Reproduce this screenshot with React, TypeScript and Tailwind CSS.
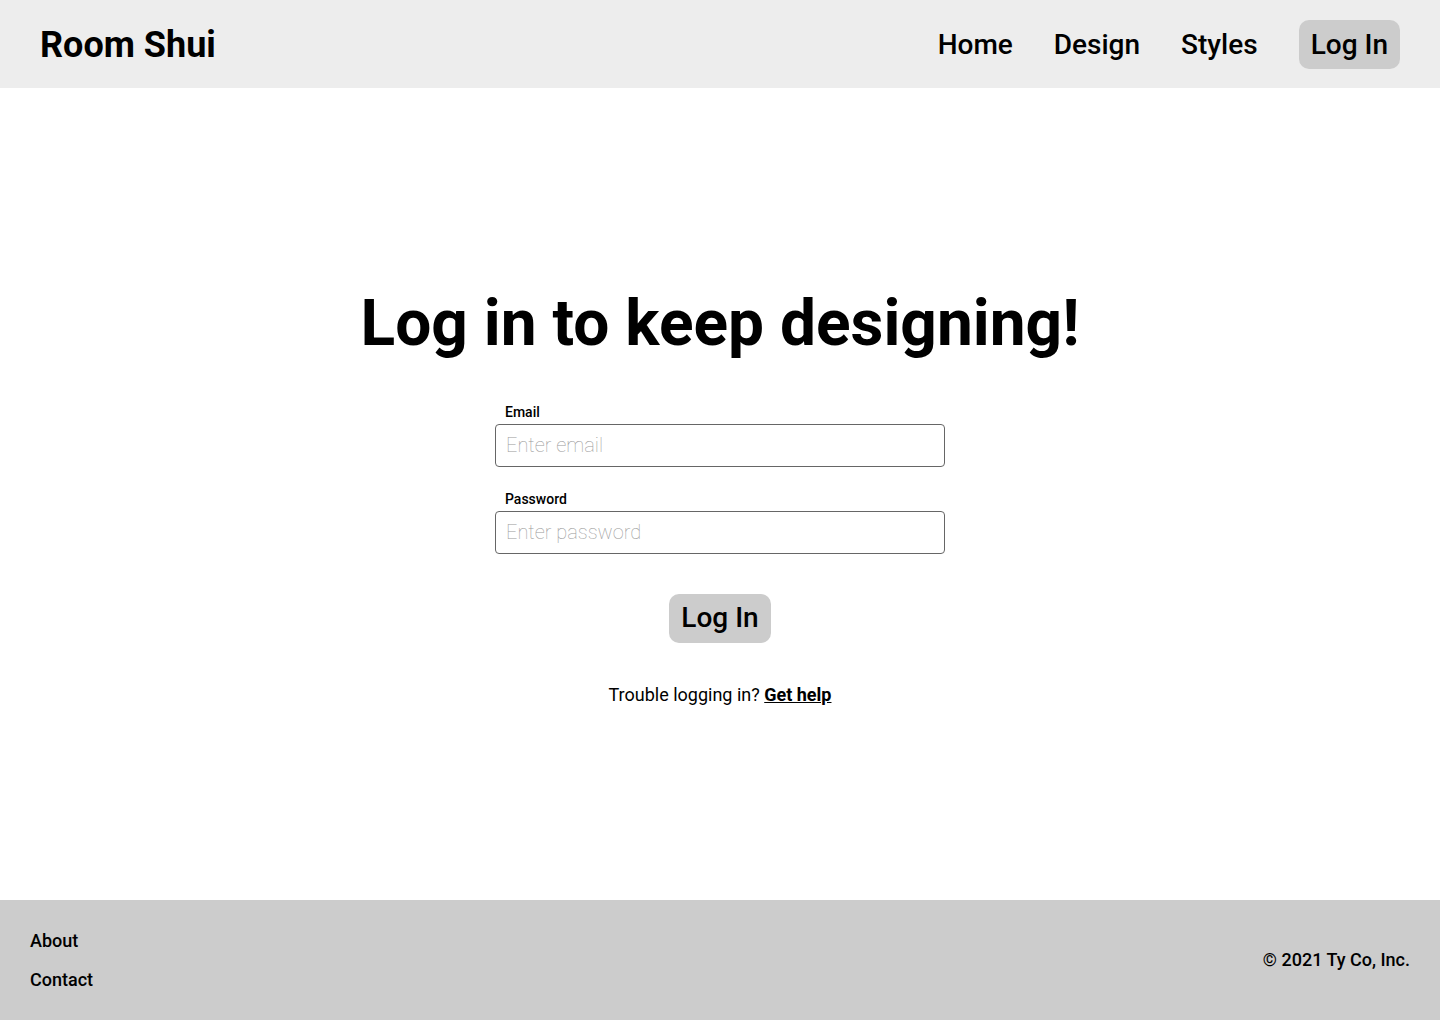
import React from "react";

export default function App() {
  const font = { fontFamily: "Roboto, 'Noto Sans', sans-serif" };
  return (
    <div className="min-h-screen flex flex-col bg-white text-black" style={font}>
      <header className="h-[88px] bg-[#ededed] flex items-center justify-between pl-[40px] pr-[40px] shrink-0">
        <div className="text-[36px] font-bold leading-none pt-[2px]">Room Shui</div>
        <nav className="flex items-center gap-[41px] text-[28px] font-medium">
          <a className="py-[6px] leading-[37px]">Home</a>
          <a className="py-[6px] leading-[37px]">Design</a>
          <a className="py-[6px] leading-[37px]">Styles</a>
          <a className="px-[12px] py-[6px] leading-[37px] bg-[#cccccc] rounded-[10px]">Log In</a>
        </nav>
      </header>
      <main className="flex-1 flex flex-col items-center justify-center pt-[3px]">
        <h1 className="text-[64px] font-bold leading-[75px] mb-[43px]">Log in to keep designing!</h1>
        <form className="w-[450px] flex flex-col">
          <label className="text-[14px] font-medium pl-[10px] leading-[16px] mb-[4px]">Email</label>
          <input
            className="h-[43px] border border-[#666666] rounded-[4px] px-[10px] text-[20px] font-thin placeholder:text-[#999999] outline-none"
            placeholder="Enter email"
          />
          <label className="text-[14px] font-medium pl-[10px] leading-[16px] mb-[4px] mt-[24px]">Password</label>
          <input
            type="password"
            className="h-[43px] border border-[#666666] rounded-[4px] px-[10px] text-[20px] font-thin placeholder:text-[#999999] outline-none"
            placeholder="Enter password"
          />
          <div className="flex justify-center mt-[40px]">
            <button type="button" className="px-[12px] h-[49px] text-[28px] font-medium bg-[#cccccc] rounded-[10px]">Log In</button>
          </div>
        </form>
        <p className="text-[18px] mt-[41px] leading-[22px]">
          Trouble logging in? <a className="font-bold underline">Get help</a>
        </p>
      </main>
      <footer className="h-[120px] bg-[#cccccc] flex items-center justify-between px-[30px] shrink-0 text-[18px] font-medium">
        <div className="flex flex-col gap-[17px] leading-[22px]">
          <a>About</a>
          <a>Contact</a>
        </div>
        <div className="leading-[22px] font-medium">© 2021 Ty Co, Inc.</div>
      </footer>
    </div>
  );
}
